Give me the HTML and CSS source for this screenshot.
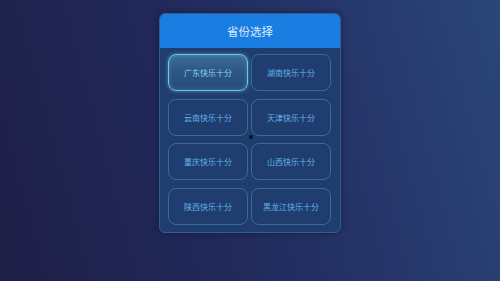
FILE: index.html
```html
<!DOCTYPE html>
<html lang="zh">
<head>
<meta charset="utf-8">
<link rel="stylesheet" href="styles.css">
</head>
<body>
<div class="stage">
  <div class="panel">
    <div class="panel-head">省份选择</div>
    <div class="grid">
      <div class="btn active">广东快乐十分</div>
      <div class="btn">湖南快乐十分</div>
      <div class="btn">云南快乐十分</div>
      <div class="btn">天津快乐十分</div>
      <div class="btn">重庆快乐十分</div>
      <div class="btn">山西快乐十分</div>
      <div class="btn">陕西快乐十分</div>
      <div class="btn">黑龙江快乐十分</div>
    </div>
    <span class="cursor-dot"></span>
  </div>
</div>
</body>
</html>
```
FILE: styles.css
```css
html, body {
  margin: 0;
  padding: 0;
  width: 500px;
  height: 281px;
  overflow: hidden;
}
body {
  font-family: "Noto Sans CJK SC", "Noto Sans", sans-serif;
  background: linear-gradient(75deg, #1e1f47 0%, #21295a 40%, #26366a 70%, #2a4677 100%);
}
.stage {
  display: flex;
  justify-content: center;
  padding-top: 13px;
}
.panel {
  position: relative;
  width: 182px;
  box-sizing: border-box;
  background: #1f3d6d;
  border: 1px solid #2f5d96;
  border-radius: 6px;
  overflow: hidden;
  box-shadow: 0 0 6px rgba(10, 15, 40, 0.5);
}
.panel-head {
  height: 34px;
  background: #1a7de2;
  color: #dceaff;
  font-size: 11.5px;
  display: flex;
  align-items: center;
  justify-content: center;
  padding-bottom: 1px;
  box-sizing: border-box;
}
.grid {
  display: grid;
  grid-template-columns: 80px 80px;
  grid-auto-rows: 37px;
  column-gap: 3px;
  row-gap: 7.5px;
  padding: 6px 9px 7px 8px;
}
.btn {
  box-sizing: border-box;
  border: 1px solid #3a6aa6;
  border-radius: 8px;
  color: #62b3ea;
  font-size: 8px;
  display: flex;
  align-items: center;
  justify-content: center;
  background: #1f3e6f;
  box-shadow: inset 0 0 0 1px rgba(30, 60, 105, 0.6);
}
.btn.active {
  border: 1px solid #67c6ec;
  background: linear-gradient(180deg, #3b6c95 0%, #2c5684 50%, #264a7a 100%);
  color: #8cd0f2;
  box-shadow: 0 0 4px rgba(100, 200, 240, 0.55), inset 0 0 4px rgba(120, 210, 245, 0.35);
}
.cursor-dot {
  position: absolute;
  left: 89px;
  top: 121px;
  width: 4px;
  height: 4px;
  border-radius: 50%;
  background: #0b1024;
}
```
